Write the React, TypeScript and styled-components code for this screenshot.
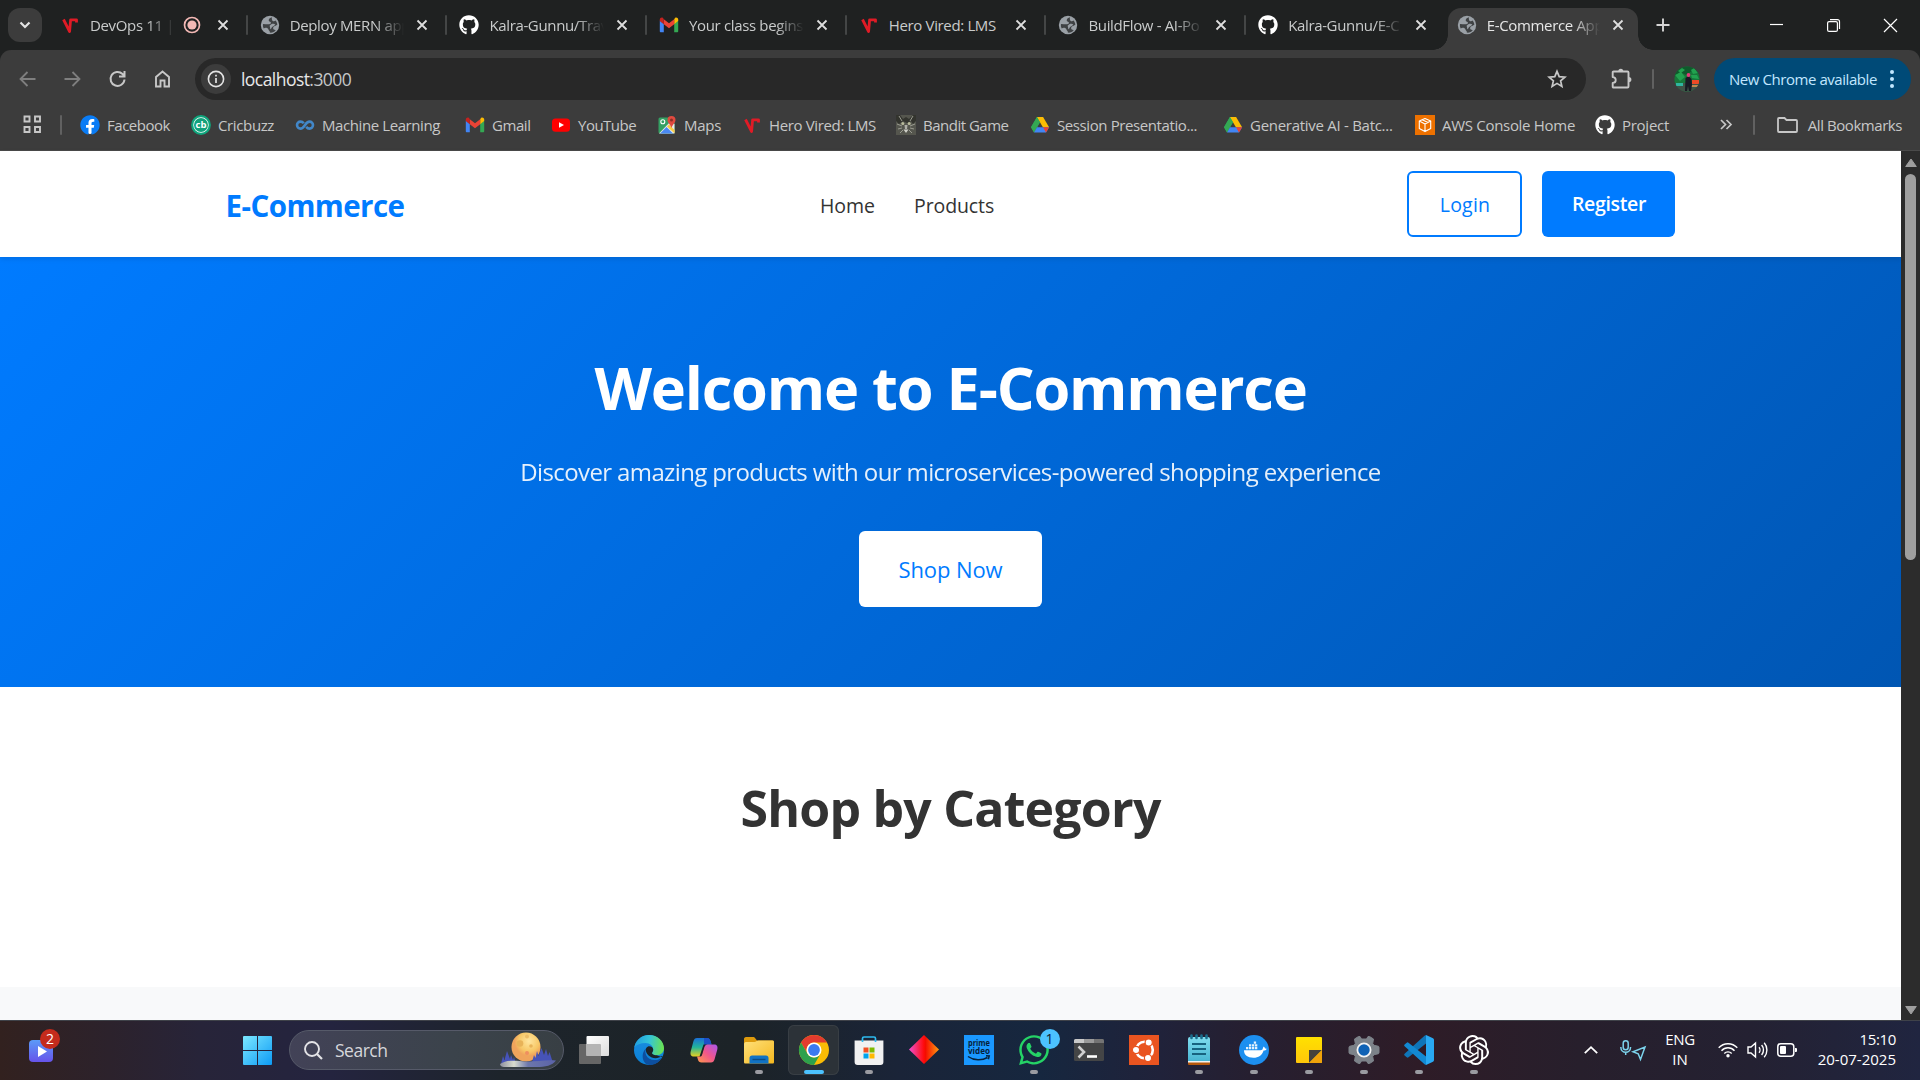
import React from "react";
import styled, { createGlobalStyle, css } from "styled-components";
import { FaGithub, FaWhatsapp, FaFacebook } from "react-icons/fa";
import { SiOpenai } from "react-icons/si";

const Global = createGlobalStyle`
  *, *::before, *::after { box-sizing: border-box; }
  html, body { margin: 0; padding: 0; overflow: hidden; }
  body { font-family: "Open Sans", "Noto Sans", sans-serif; background: #1f2020; }
  h1, h2, p { margin: 0; }
  svg { display: block; flex: none; overflow: visible; }
`;

const Screen = styled.div`
  width: 1920px;
  height: 1080px;
  display: flex;
  flex-direction: column;
  overflow: hidden;
`;

const Text = styled.span<{ $ls?: number }>`
  white-space: nowrap;
  letter-spacing: ${(p) => p.$ls ?? 0}px;
`;

/* ---------- tab strip ---------- */

const TabStrip = styled.div`
  height: 50px;
  flex: none;
  display: flex;
  background: #1f2121;
  padding-left: 8px;
`;

const TabSearch = styled.div`
  width: 34px;
  height: 34px;
  margin: 8px 5px 0 0;
  border-radius: 12px;
  background: #3c3c3c;
  display: flex;
  align-items: center;
  justify-content: center;
`;

const Tab = styled.div<{ $active?: boolean; $sep?: boolean }>`
  position: relative;
  width: 199.7px;
  height: 50px;
  display: flex;
  align-items: center;
  padding: 0 14px 0 13px;
  color: #c9cbcb;
  ${(p) =>
    p.$sep &&
    css`
      &::after {
        content: "";
        position: absolute;
        right: -1px;
        top: 15px;
        width: 2px;
        height: 20px;
        border-radius: 1px;
        background: #444646;
      }
    `}
  ${(p) =>
    p.$active &&
    css`
      width: 190px;
      height: 42px;
      margin: 8px 0 0 3px;
      padding: 0 10px 8px 9px;
      border-radius: 13px 13px 0 0;
      background: #3c3c3c;
      color: #e6e6e6;
      &::before,
      &::after {
        content: "";
        position: absolute;
        bottom: 0;
        width: 15px;
        height: 15px;
      }
      &::before {
        left: -15px;
        background: radial-gradient(circle at 0 0, transparent 14.5px, #3c3c3c 15px);
      }
      &::after {
        right: -15px;
        background: radial-gradient(circle at 100% 0, transparent 14.5px, #3c3c3c 15px);
      }
    `}
`;

const TabTitle = styled.div<{ $fade: boolean }>`
  flex: 1;
  min-width: 0;
  margin: 0 8px 0 10px;
  overflow: hidden;
  font-size: 15px;
  line-height: 24px;
  ${(p) =>
    p.$fade &&
    css`
      mask-image: linear-gradient(90deg, #000 calc(100% - 28px), transparent 100%);
    `}
`;

const CloseBox = styled.div`
  width: 20px;
  display: flex;
  justify-content: center;
`;

const RecordSlot = styled.div`
  width: 20px;
  margin-right: 10px;
`;

const NewTab = styled.div`
  width: 20px;
  margin-left: 18px;
  display: flex;
  align-items: center;
`;

const WindowControls = styled.div`
  display: flex;
  align-items: center;
  margin-left: auto;
  padding-right: 23px;
  gap: 44px;
`;

/* ---------- toolbar ---------- */

const ToolbarBack = styled.div`
  flex: none;
  background: #1f2121;
`;

const Toolbar = styled.div`
  height: 58px;
  display: flex;
  align-items: center;
  background: #3c3c3c;
  border-radius: 11px 11px 0 0;
  padding: 0 9px 0 17px;
`;

const NavIcon = styled.div<{ $dim?: boolean }>`
  width: 45px;
  color: ${(p) => (p.$dim ? "#7f7f7f" : "#c7c7c7")};
`;

const Omnibox = styled.div`
  width: 1391px;
  height: 42px;
  border-radius: 21px;
  background: #282828;
  display: flex;
  align-items: center;
  padding: 0 19px 0 6px;
  margin-left: -2px;
`;

const SiteInfo = styled.div`
  width: 30px;
  height: 30px;
  border-radius: 50%;
  background: #3c3c3c;
  display: flex;
  align-items: center;
  justify-content: center;
  margin-right: 10px;
`;

const Url = styled.div`
  flex: 1;
  font-size: 17.5px;
  color: #e8e8e8;
`;

const Port = styled.span`
  color: #c4c7c9;
`;

const ToolDivider = styled.div`
  width: 2px;
  height: 20px;
  border-radius: 1px;
  background: #616161;
  flex: none;
`;

const ExtSlot = styled.div`
  margin: 0 19px 0 25px;
`;

const AvatarSlot = styled.div`
  margin: 0 14px 0 20px;
`;

const UpdateChip = styled.div`
  width: 197px;
  height: 42px;
  flex: none;
  border-radius: 21px;
  background: #004a77;
  color: #c2e7ff;
  display: flex;
  align-items: center;
  justify-content: space-between;
  padding: 0 17px 0 15px;
  font-size: 15px;
`;

/* ---------- bookmarks ---------- */

const Bookmarks = styled.div`
  height: 43px;
  display: flex;
  align-items: center;
  background: #3c3c3c;
  border-bottom: 1px solid #4a4a4a;
  padding: 0 18px 9px 23px;
  font-size: 15px;
  color: #c7c7c7;
`;

const AppsSlot = styled.div`
  width: 37px;
`;

const BookmarkList = styled.div`
  display: flex;
  margin-left: 18px;
`;

const Bookmark = styled.div<{ $w: number }>`
  width: ${(p) => p.$w}px;
  display: flex;
  align-items: center;
  gap: 7px;
`;

const BookmarkIcon = styled.div`
  width: 20px;
  height: 20px;
  flex: none;
`;

const FacebookMark = styled(FaFacebook)`
  color: #0a7cf5;
  background: radial-gradient(circle, #fff 60%, transparent 62%);
`;

const BookmarkEnd = styled.div`
  display: flex;
  align-items: center;
  margin-left: auto;
`;

const FolderSlot = styled.div`
  margin: 0 10px 0 22px;
`;

const Chevrons = styled.div`
  margin-right: 21px;
`;

/* ---------- page ---------- */

const Viewport = styled.div`
  flex: 1;
  min-height: 0;
  display: flex;
`;

const Page = styled.div`
  width: 1901px;
  background: #fff;
  display: flex;
  flex-direction: column;
`;

const SiteHeader = styled.header`
  position: relative;
  z-index: 1;
  flex: none;
  height: 106px;
  background: #fff;
  box-shadow: 0 2px 5px rgba(0, 0, 0, 0.1);
`;

const HeaderInner = styled.div`
  width: 1450px;
  height: 100%;
  margin: 0 auto;
  display: flex;
  align-items: center;
  justify-content: space-between;
`;

const Logo = styled.div`
  font-size: 29.5px;
  font-weight: 700;
  color: #007bff;
  width: 179px;
  padding-top: 2px;
`;

const SiteNav = styled.nav`
  display: flex;
  gap: 39px;
  font-size: 19.5px;
  font-weight: 500;
  color: #333;
  padding-top: 2px;
  margin-left: 2px;
`;

const AuthButtons = styled.div`
  display: flex;
  gap: 20px;
`;

const AuthButton = styled.div<{ $primary?: boolean; $w: number }>`
  width: ${(p) => p.$w}px;
  height: 66px;
  display: flex;
  align-items: center;
  justify-content: center;
  border-radius: 6px;
  font-size: 19.5px;
  font-weight: ${(p) => (p.$primary ? 600 : 500)};
  color: ${(p) => (p.$primary ? "#fff" : "#007bff")};
  background: ${(p) => (p.$primary ? "#007bff" : "#fff")};
  border: ${(p) => (p.$primary ? "none" : "2px solid #007bff")};
  padding-bottom: ${(p) => (p.$primary ? 2 : 0)}px;
  padding-top: ${(p) => (p.$primary ? 0 : 1)}px;
`;

const Hero = styled.section`
  height: 430px;
  flex: none;
  padding-top: 82px;
  display: flex;
  flex-direction: column;
  align-items: center;
  color: #fff;
  background: linear-gradient(135deg, #007bff 0%, #0056b3 100%);
`;

const HeroTitle = styled.h1`
  font-size: 59.5px;
  line-height: 96px;
  font-weight: 700;
`;

const HeroSub = styled.p`
  margin-top: 17px;
  font-size: 24px;
  line-height: 40px;
  opacity: 0.9;
`;

const ShopButton = styled.div`
  margin-top: 39px;
  width: 183px;
  height: 76px;
  border-radius: 6px;
  background: #fff;
  color: #007bff;
  font-size: 22px;
  font-weight: 500;
  display: flex;
  align-items: center;
  justify-content: center;
`;

const Categories = styled.section`
  height: 300px;
  flex: none;
  padding-top: 81px;
  text-align: center;
`;

const CategoryTitle = styled.h2`
  font-size: 50px;
  line-height: 80px;
  font-weight: 700;
  color: #333;
`;

const NextSection = styled.section`
  flex: 1;
  background: #f8f9fa;
`;

const Scrollbar = styled.div`
  width: 19px;
  background: #2c2c2c;
  display: flex;
  flex-direction: column;
  align-items: center;
  padding: 7px 0 5px;
`;

const Thumb = styled.div`
  width: 11px;
  height: 386px;
  margin: 7px 0 auto;
  border-radius: 6px;
  background: #9f9f9f;
`;

/* ---------- taskbar ---------- */

const Taskbar = styled.div`
  height: 60px;
  flex: none;
  display: flex;
  align-items: center;
  border-top: 1px solid #3f4249;
  color: #fff;
  background: linear-gradient(
    90deg,
    #32211f 0,
    #2c222c 110px,
    #272439 200px,
    #24243f 330px,
    #1d242b 500px,
    #1c2327 740px,
    #1a2438 900px,
    #16273f 1040px,
    #20223a 1160px,
    #261f30 1250px,
    #2e1c27 1420px,
    #271f2c 1580px,
    #242132 1750px,
    #202540 1920px
  );
`;

const Widgets = styled.div`
  position: relative;
  width: 24px;
  height: 22px;
  margin-left: 29px;
`;

const Badge = styled.div<{ $blue?: boolean }>`
  position: absolute;
  right: ${(p) => (p.$blue ? -11 : -7)}px;
  top: ${(p) => (p.$blue ? -6 : -11)}px;
  width: 20px;
  height: 20px;
  border-radius: 50%;
  background: ${(p) => (p.$blue ? "#4cc2ff" : "#c42b1c")};
  color: ${(p) => (p.$blue ? "#10202c" : "#fff")};
  font-size: 14px;
  line-height: 20px;
  text-align: center;
`;

const StartSlot = styled.div`
  margin-left: 190px;
`;

const SearchBox = styled.div`
  width: 275px;
  height: 40px;
  margin: 0 0 1px 17px;
  border-radius: 20px;
  border: 1px solid #565a69;
  background: linear-gradient(90deg, #424257, #3b434b 60%, #383f44);
  display: flex;
  align-items: center;
  padding: 0 7px 0 14px;
  font-size: 17.5px;
  color: #d6d7db;
`;

const SearchText = styled.div`
  flex: 1;
  margin-left: 12px;
`;

const AppRow = styled.div`
  display: flex;
  margin: 0 0 1px 2px;
`;

const AppCell = styled.div<{ $active?: boolean }>`
  position: relative;
  width: 51px;
  height: 50px;
  margin: 0 2px;
  border-radius: 6px;
  display: flex;
  flex-direction: column;
  align-items: center;
  padding-top: 10px;
  ${(p) =>
    p.$active &&
    css`
      background: #2c3238;
      box-shadow: inset 0 0 0 1px #383e44;
    `}
`;

const AppIcon = styled.div`
  position: relative;
  width: 30px;
  height: 30px;
  flex: none;
  display: flex;
  align-items: center;
  justify-content: center;
`;

const Running = styled.div<{ $active?: boolean }>`
  margin-top: 5px;
  width: ${(p) => (p.$active ? 20 : 8)}px;
  height: 4px;
  border-radius: 2px;
  background: ${(p) => (p.$active ? "#4cc2ff" : "#9a9ba1")};
`;

const Tray = styled.div`
  margin-left: auto;
  display: flex;
  align-items: center;
  padding: 0 24px 2px 0;
  font-size: 15px;
  line-height: 20px;
`;

const PrivacySlot = styled.div`
  margin: 2px 0 0 22px;
`;

const Lang = styled.div`
  display: flex;
  flex-direction: column;
  align-items: center;
  width: 30px;
  margin: 0 23px 1px 19px;
`;

const StatusIcons = styled.div`
  display: flex;
  align-items: center;
  gap: 9px;
  margin-right: 20px;
`;

const Clock = styled.div`
  display: flex;
  flex-direction: column;
  align-items: flex-end;
  width: 79px;
  margin-bottom: 2px;
`;

/* ---------- small favicons, all on a 20 grid ---------- */

const Vired = () => (
  <svg width="20" height="20" viewBox="0 0 20 20">
    <path d="M3.500 4.500 9.600 16.500 10.600 4.800H16.500V7.500" fill="none" stroke="#e01b26" strokeWidth="2.800" strokeLinejoin="round" />
  </svg>
);

const Globe = () => (
  <svg width="20" height="20" viewBox="0 0 20 20">
    <circle cx="10" cy="10" r="9.200" fill="#9aa0a6" />
    <path
      d="M12 2.300c-1.600.3-3.300 1.600-3.300 3 0 1.200 1.300 1.300 2 2 .6.700.1 1.500-.8 1.800-1.700.5-3.900-.1-6.900-.1-.3 1.700.1 3.200.7 4.400 1-.6 2.300-.8 3.400-.3 1.200.5 1.200 1.600 1.900 2.300.6.600 1 .9.800 2.200 2.500.3 4.700-.8 6-2.700-1.300.2-2.600-.4-2.700-1.600-.1-1.300 1-1.900 1.900-2.300.8-.4 1.400-1.100 2.300-1.100-.1-1.800-.7-3.200-1.700-4.400-.7.800-2 1.100-2.900.4-.9-.800-1.100-2.300-.7-3.600z"
      fill="#2f3133"
      opacity=".85"
    />
    <path d="M11.300 9.200c1.500-.7 3-.6 4 .2-.6 1.300-2.300 1.700-3.200 2.600-.9.800-.7 2-1.600 2.300-.9-1.200.1-2.300-1-3.200.5-.8 1.100-1.500 1.800-1.900z" fill="#9aa0a6" />
  </svg>
);

const Gmail = () => (
  <svg width="20" height="20" viewBox="0 0 20 20">
    <path d="M.8 5.500V16.200c0 .6.500 1 1 1H4.800V9z" fill="#4285f4" />
    <path d="M15.200 17.200h3c.5 0 1-.4 1-1V5.500L15.200 9z" fill="#34a853" />
    <path d="M15.200 4.200V9.300l4-3.200V4.500c0-1.700-1.900-2.600-3.200-1.600z" fill="#fbbc04" />
    <path d="M4.800 9.300V4.200L10 8.200l5.200-4V9.300L10 13.300z" fill="#ea4335" />
    <path d="M.8 4.500v1.600l4 3.200V4.200L4 2.900C2.700 1.900.8 2.800.8 4.500z" fill="#c5221f" />
  </svg>
);

const Cricbuzz = () => (
  <svg width="20" height="20" viewBox="0 0 20 20">
    <circle cx="10" cy="10" r="8.800" fill="#fff" stroke="#0fa57c" strokeWidth="2.200" />
    <circle cx="10" cy="10" r="7" fill="#12a17c" />
    <text x="10" y="13.300" fontSize="9.500" fontWeight="700" textAnchor="middle" fill="#fff">cb</text>
  </svg>
);

const Infinity = () => (
  <svg width="20" height="20" viewBox="0 0 20 20">
    <path d="M8.800 8.300C7.900 7.200 6.800 6.600 5.500 6.600a3.500 3.500 0 0 0 0 7c4.200 0 4.600-7 9-7a3.500 3.500 0 0 1 0 7c-1.300 0-2.400-.6-3.300-1.700" fill="none" stroke="#4287c8" strokeWidth="2.600" />
  </svg>
);

const YouTube = () => (
  <svg width="20" height="20" viewBox="0 0 20 20">
    <rect x="1" y="3.500" width="18" height="13.200" rx="3.500" fill="#f00" />
    <path d="M8 7.200v5.600l5-2.800z" fill="#fff" />
  </svg>
);

const Maps = () => (
  <svg width="20" height="20" viewBox="0 0 20 20">
    <rect x="1.500" y="2.500" width="16" height="16" rx="1.500" fill="#34a063" />
    <path d="M2 18.500 14 6l3.500 3v9.500z" fill="#e9e9e9" />
    <path d="M3 18.500 9.500 12l6.500 6.500z" fill="#4a89f3" />
    <path d="M10 11.500 12 9.500 17.500 15v3.300z" fill="#fbcb3f" />
    <circle cx="5.800" cy="6.800" r="2" fill="none" stroke="#fff" strokeWidth="1.100" />
    <path d="M14.500 1a4 4 0 0 1 4 4c0 3-3.200 4.500-4 8-.8-3.500-4-5-4-8a4 4 0 0 1 4-4z" fill="#e04a3f" />
    <circle cx="14.500" cy="5" r="1.500" fill="#8c2f27" />
  </svg>
);

const Bandit = () => (
  <svg width="20" height="20" viewBox="0 0 20 20">
    <rect width="20" height="20" fill="#55564e" />
    <path d="M0 0h4l3 4 3-2 3 2 4-4h3v6l-3 3-2-3-4 2-4-2-4 3-3-3z" fill="#33342e" />
    <path d="M3 1l3 5M17 1l-3 5M1 9l5 2M19 9l-5 2M2 14l4-1M18 14l-4-1M4 18l3-3M16 18l-3-3" stroke="#9a9b90" strokeWidth="1" />
    <circle cx="6.800" cy="8.500" r="1.500" fill="#b9bb9c" />
    <circle cx="13.200" cy="8.500" r="1.500" fill="#b9bb9c" />
    <path d="M8.500 10h3l-.5 4h-2z" fill="#b0b0a8" />
    <path d="M7.500 14.500h5L10 18z" fill="#d0d0c9" />
  </svg>
);

const Drive = () => (
  <svg width="20" height="20" viewBox="0 0 20 20">
    <path d="M6.900 2h6.200L10 7.300 4 17.600 1 12.300z" fill="#1ea362" />
    <path d="M6.900 2h6.200l6 10.300h-6.200z" fill="#fbbc04" />
    <path d="M6.900 2 1 12.300l3 5.300L10 7.300z" fill="#34a853" />
    <path d="M7 12.300h12.100l-3.100 5.300H4z" fill="#4285f4" />
    <path d="M13 12.300h6.100L16 17.600z" fill="#ea4335" />
  </svg>
);

const Aws = () => (
  <svg width="20" height="20" viewBox="0 0 20 20">
    <rect width="20" height="20" fill="#ed7100" />
    <path d="M10 3.500 15.700 6v7.500L10 16.600 4.300 13.500V6zM4.300 6 10 9l5.700-3M10 9v7.500M7.200 4.700 13 7.600" fill="none" stroke="#fff" strokeWidth="1.100" strokeLinejoin="round" />
  </svg>
);

const Cross = () => (
  <svg width="10" height="10" viewBox="0 0 10 10">
    <path d="M.5.5l9 9M9.500.5l-9 9" stroke="#dedede" strokeWidth="1.800" />
  </svg>
);

const Recording = () => (
  <svg width="18" height="18" viewBox="0 0 18 18">
    <circle cx="9" cy="9" r="7.500" fill="none" stroke="#f2b8b5" strokeWidth="1.700" />
    <circle cx="9" cy="9" r="4.600" fill="#f2b8b5" />
  </svg>
);

/* ---------- taskbar icons, on a 30 grid ---------- */

const I = ({ children }: { children: React.ReactNode }) => (
  <svg width="30" height="30" viewBox="0 0 30 30">{children}</svg>
);

const TaskView = () => (
  <I>
    <defs>
      <linearGradient id="tv" x1="0" y1="0" x2="1" y2="1"><stop stopColor="#fff" /><stop offset="1" stopColor="#dcdcdc" /></linearGradient>
    </defs>
    <rect x="0" y="9" width="22" height="20" rx="1" fill="#666" />
    <rect x="7.500" y="1" width="22.500" height="20" rx="1" fill="url(#tv)" />
    <path d="M7.500 9H21a1 1 0 0 1 1 1v11H7.500z" fill="#b4b4b4" />
  </I>
);

const Edge = () => (
  <I>
    <defs>
      <linearGradient id="eg" x1="0" y1=".3" x2="1" y2=".4"><stop stopColor="#1f9de0" /><stop offset=".5" stopColor="#35c5d8" /><stop offset="1" stopColor="#6be34f" /></linearGradient>
      <linearGradient id="eb" x1="0" y1="0" x2="0" y2="1"><stop stopColor="#1b8fe0" /><stop offset="1" stopColor="#0a7fd6" /></linearGradient>
    </defs>
    <circle cx="15" cy="15" r="15" fill="url(#eb)" />
    <path d="M.3 12.500C1.500 5.500 7.500 0 15 0c8.500 0 15 6.300 15 13.300 0 4.200-3.300 6.900-7.200 6.900-3.400 0-5.300-1.500-4.600-2.700.8-1.200 1-1.900 1-3 0-3.400-3-6.500-7.700-6.500C6.500 8 2.500 9.500.3 12.500z" fill="url(#eg)" />
    <path d="M12 13.500c-2 4 .5 11.500 8.500 11.500 3 0 5.300-1 7.500-2.600C25.500 27 20.800 30 15.500 30 8 29.500 6.500 18 12 13.500z" fill="#0d4f9f" />
    <path d="M12.300 13c-1.500 2.500.5 7.500 5.500 9.500 3.500 1.300 7.500.5 10-1.200.6-.4 1 0 .7.600-2.500-.3-4-.9-5.700-1.700-3.400 0-5.300-1.500-4.600-2.700.8-1.200 1-1.900 1-3-.4-3-4.900-4.500-6.900-1.500z" fill="#1c2327" />
  </I>
);

const Copilot = () => (
  <I>
    <defs>
      <linearGradient id="c1" x1="0" y1="0" x2="0" y2="1"><stop stopColor="#1b6fd8" /><stop offset=".5" stopColor="#22b59a" /><stop offset="1" stopColor="#e8d020" /></linearGradient>
      <linearGradient id="c2" x1="1" y1="0" x2="0" y2="1"><stop stopColor="#a856f0" /><stop offset=".5" stopColor="#f0568b" /><stop offset="1" stopColor="#ff9a4a" /></linearGradient>
    </defs>
    <path d="M8 3h10c2 0 3 1.500 3.500 3l1 3.500h-4c-2 0-2.800 1-3.400 3l-2 6.500c-.6 1.800-1.500 2.500-3.500 2.500H5c-3 0-4-2-3.300-5L4.500 6C5.200 4 6 3 8 3z" fill="url(#c1)" />
    <path d="M15 3h3.500c1.500 0 2.500 1.500 3 3l1 3.500H18c-1.500 0-2.500.7-3 2z" fill="#1c50c8" />
    <path d="M22 27.500H12.500c-2 0-3-1-3.500-2.800l-1-3.200h1.600c2 0 3-1 3.500-2.800l2-6.700c.6-1.800 1.600-2.500 3.400-2.500H25c3 0 4 2 3.300 5l-2.800 10c-.7 2-1.500 3-3.500 3z" fill="url(#c2)" />
    <path d="M14.500 9.500h4c-1.500 0-2.600 1-3.100 2.500L13 20c-.4 1-1 1.500-2 1.500h-.5z" fill="#1c2327" />
  </I>
);

const Explorer = () => (
  <I>
    <defs>
      <linearGradient id="ex" x1="0" y1="0" x2="1" y2="1"><stop stopColor="#ffe07a" /><stop offset="1" stopColor="#f5b81f" /></linearGradient>
    </defs>
    <path d="M0 4c0-1 .7-2 2-2h7c1 0 1.500.4 2 1l2 2.500h15c1.500 0 2 .7 2 2V12H0z" fill="#dd9a0c" />
    <path d="M0 10c0-2 .5-3 2-3h8.500c1.500 0 2-1.500 4-1.500H28.500c1 0 1.500.6 1.500 1.500v20c0 1-.5 1.500-1.500 1.500h-27C.5 28.500 0 28 0 27z" fill="url(#ex)" />
    <path d="M5.500 28.500V23c0-1.500 1-2.500 2.500-2.500h14c1.500 0 2.500 1 2.500 2.500v5.500z" fill="#1173c4" />
    <path d="M8.500 24.500h13" stroke="#0a4c86" strokeWidth="1.400" />
  </I>
);

const Chrome = () => (
  <I>
    <circle cx="15" cy="15" r="15" fill="#fbbc05" />
    <path d="M2 7.500A15 15 0 0 1 28 7.500H15a7.500 7.500 0 0 0-6.500 11.250z" fill="#e33b2e" />
    <path d="M2 7.500 8.500 18.750A7.500 7.500 0 0 0 21.500 18.750L15 30A15 15 0 0 1 2 7.500z" fill="#2da14c" />
    <circle cx="15" cy="15" r="7.500" fill="#fff" />
    <circle cx="15" cy="15" r="5.900" fill="#3a7af0" />
  </I>
);

const Store = () => (
  <I>
    <path d="M.6 5.500h28.800V27a3 3 0 0 1-3 3H3.600a3 3 0 0 1-3-3z" fill="#f1f1f1" />
    <path d="M8.500 7V3.500A1.500 1.500 0 0 1 10 2h10a1.500 1.500 0 0 1 1.500 1.500V7" fill="none" stroke="#2ebbf0" strokeWidth="1.700" />
    <path d="M9.500 12.500h5v5h-5z" fill="#f25022" />
    <path d="M15.500 12.500h5v5h-5z" fill="#7fba00" />
    <path d="M9.500 18.500h5v5h-5z" fill="#00a4ef" />
    <path d="M15.500 18.500h5v5h-5z" fill="#ffb900" />
  </I>
);

const Diamond = () => (
  <I>
    <defs>
      <linearGradient id="dm"><stop stopColor="#f050d0" /><stop offset=".5" stopColor="#ff0a0a" /><stop offset=".55" stopColor="#f40d00" /><stop offset="1" stopColor="#ff9a10" /></linearGradient>
    </defs>
    <path d="M15 0 30 14.500 15 29 0 14.500z" fill="url(#dm)" />
  </I>
);

const Prime = () => (
  <I>
    <rect width="30" height="30" fill="#1a98ff" />
    <text x="15" y="10.500" fontSize="9.500" fontWeight="700" textAnchor="middle" fill="#06223c" textLength="22" lengthAdjust="spacingAndGlyphs">prime</text>
    <text x="15" y="19" fontSize="9.500" fontWeight="700" textAnchor="middle" fill="#06223c" textLength="22" lengthAdjust="spacingAndGlyphs">video</text>
    <path d="M4 21.500c6 4.300 14 4.300 19.500 1M22 20.800l3.200.2-.8 3.200" fill="none" stroke="#06223c" strokeWidth="1.500" />
  </I>
);

const Terminal = () => (
  <I>
    <rect y="4" width="30" height="22" rx="1.500" fill="#444546" />
    <path d="M1.500 4h8.500v4H0V5.500A1.500 1.500 0 0 1 1.500 4z" fill="#c9c9c9" />
    <path d="M10 4h10v4H10z" fill="#9a9a9a" />
    <path d="M20 4h8.500A1.500 1.500 0 0 1 30 5.500V8H20z" fill="#747474" />
    <path d="m4.500 11.500 5.500 5.500-5.500 5.500" fill="none" stroke="#d0d0d0" strokeWidth="2.600" />
    <path d="M13 21.500h10" stroke="#fff" strokeWidth="2.600" />
  </I>
);

const Ubuntu = () => (
  <I>
    <rect width="30" height="30" fill="#e95420" />
    <circle cx="15.500" cy="15" r="8.300" fill="none" stroke="#fff" strokeWidth="2.600" />
    <g fill="#fff" stroke="#e95420" strokeWidth="1.200">
      <circle cx="7" cy="15" r="3.600" />
      <circle cx="19.700" cy="7.500" r="3.600" />
      <circle cx="19" cy="23" r="3.600" />
    </g>
  </I>
);

const Notepad = () => (
  <I>
    <defs>
      <linearGradient id="np" x1="0" y1="0" x2="0" y2="1"><stop stopColor="#7fdcee" /><stop offset="1" stopColor="#49b6d3" /></linearGradient>
    </defs>
    <path d="M4 24h22v5a1 1 0 0 1-1 1H5a1 1 0 0 1-1-1z" fill="#b5580d" />
    <path d="M4 22h22v5.500H4z" fill="#f2f2f2" />
    <path d="M4 4a2 2 0 0 1 2-2h18a2 2 0 0 1 2 2v22H4z" fill="url(#np)" />
    <path d="M8 9h14M8 14h14M8 19h14" stroke="#17627f" strokeWidth="1.800" />
    <path d="M7.500.5V3M12.500.5V3M17.500.5V3M22.500.5V3" stroke="#1a6d8c" strokeWidth="2.600" strokeLinecap="round" />
  </I>
);

const Docker = () => (
  <I>
    <circle cx="15" cy="15" r="15" fill="#1d8fef" />
    <path d="M5 15.300h16.500c1.300 0 2.200-.5 2.300-1.700.1-.8.400-1.400 1-2 .8.600 1.100 1.200 1.200 2 .8-.1 1.200 0 1.600.3-.5 1.100-1.500 1.600-3 1.600-1.600 5-5 7.300-10.200 7.300C8.500 22.800 5 20 5 15.300z" fill="#fff" />
    <path d="M7 12h2.300v2.300H7zM10 12h2.300v2.300H10zM13 12h2.300v2.300H13zM16 12h2.300v2.300H16zM10 9.300h2.300v2.200H10zM13 9.300h2.300v2.200H13zM16 9.300h2.300v2.200H16zM14.800 6.600h2.300v2.200h-2.300z" fill="#e4f2fd" />
  </I>
);

const Sticky = () => (
  <I>
    <defs>
      <linearGradient id="st" x1="0" y1="0" x2="0" y2="1"><stop stopColor="#ffe100" /><stop offset="1" stopColor="#ffc60a" /></linearGradient>
    </defs>
    <rect x="2" y="2" width="26" height="26" rx="1" fill="url(#st)" />
    <path d="M15 15h13L15 28z" fill="#45423c" />
    <path d="M28 15v12a1 1 0 0 1-1 1H15z" fill="#f0a30a" />
  </I>
);

const Settings = () => (
  <I>
    <path
      d="M11 1.500 12.500 4h5L19 1.500h1.500L24.500 4l-.8 4.500 1.300 1.800 4.500 1 .5 1v5.400l-.5 1-4.500 1-1.300 1.800.8 4.500-4 2.500H19L17.500 26h-5L11 28.500H9.500L5.500 26l.8-4.500L5 19.700l-4.500-1L0 17.700v-5.400l.5-1 4.500-1 1.300-1.800L5.500 4l4-2.500z"
      fill="#7c8289"
      stroke="#7c8289"
      strokeWidth="1"
      strokeLinejoin="round"
    />
    <circle cx="15" cy="15" r="6.600" fill="#0f62b5" stroke="#f3f3f3" strokeWidth="1.800" />
  </I>
);

const VsCode = () => (
  <I>
    <path d="M22 0 29 3.300a1.800 1.800 0 0 1 1 1.700v20a1.800 1.800 0 0 1-1 1.700L22 30z" fill="#29a9f2" />
    <path d="M22 0v8.500L4.500 22.300a1.500 1.500 0 0 1-1.800 0L.6 20.500a1.200 1.200 0 0 1 0-1.800L20.500.7z" fill="#0f75b8" />
    <path d="M22 30v-8.500L4.500 7.700a1.500 1.500 0 0 0-1.800 0L.6 9.500a1.200 1.200 0 0 0 0 1.800L20.500 29.300z" fill="#1389d2" />
  </I>
);

const Moon = () => (
  <svg width="56" height="36" viewBox="0 0 56 36">
    <defs>
      <radialGradient id="mn" cx=".6" cy=".3"><stop stopColor="#ffe6a0" /><stop offset=".7" stopColor="#f7c766" /><stop offset="1" stopColor="#efa45c" /></radialGradient>
      <linearGradient id="gr"><stop stopColor="#8d8f9c" /><stop offset=".25" stopColor="#d9dccf" /><stop offset=".5" stopColor="#6d77ab" /><stop offset="1" stopColor="#5a62a8" /></linearGradient>
    </defs>
    <circle cx="26" cy="15" r="14.500" fill="url(#mn)" />
    <circle cx="20" cy="11.500" r="3.300" fill="#e8b358" />
    <circle cx="31" cy="14" r="1.800" fill="#e8b358" />
    <circle cx="27" cy="4.500" r="2" fill="#edbd66" />
    <circle cx="27" cy="21" r="2" fill="#ef8f60" />
    <path d="M1 32l2-8 1.500 4L7 19l3 8 1-4 2 5 1-3 2 7z" fill="#4653b8" />
    <path d="M32 30l2-7 1.500 3L37 19l1.500 5 3-8 2.500 7 2-6 2 7 1.500-4L53 31z" fill="#4653b8" />
    <path d="M0 32c8-5 18-3 25-2.500 10 .5 20-2 31-1-4 5-10 6.500-20 6.500H4c-2 0-4-1-4-3z" fill="url(#gr)" />
  </svg>
);

/* ---------- data ---------- */

const GH = () => <FaGithub size={20} color="#fff" />;

const tabs = [
  { icon: <Vired />, title: "DevOps 11 | In", rec: true, fade: true },
  { icon: <Globe />, title: "Deploy MERN app", fade: true },
  { icon: <GH />, title: "Kalra-Gunnu/Trav", fade: true },
  { icon: <Gmail />, title: "Your class begins", fade: true },
  { icon: <Vired />, title: "Hero Vired: LMS", fade: false },
  { icon: <Globe />, title: "BuildFlow - AI-Po", fade: true },
  { icon: <GH />, title: "Kalra-Gunnu/E-C", fade: true },
  { icon: <Globe />, title: "E-Commerce App", fade: true, active: true },
];

const bookmarks = [
  { icon: <FacebookMark size={20} />, t: "Facebook", w: 111, ls: -0.47 },
  { icon: <Cricbuzz />, t: "Cricbuzz", w: 104, ls: -0.37 },
  { icon: <Infinity />, t: "Machine Learning", w: 170, ls: -0.41 },
  { icon: <Gmail />, t: "Gmail", w: 86, ls: -0.44 },
  { icon: <YouTube />, t: "YouTube", w: 106, ls: -0.5 },
  { icon: <Maps />, t: "Maps", w: 85, ls: -0.29 },
  { icon: <Vired />, t: "Hero Vired: LMS", w: 154, ls: -0.36 },
  { icon: <Bandit />, t: "Bandit Game", w: 134, ls: -0.5 },
  { icon: <Drive />, t: "Session Presentatio...", w: 193, ls: -0.4 },
  { icon: <Drive />, t: "Generative AI - Batc...", w: 192, ls: -0.28 },
  { icon: <Aws />, t: "AWS Console Home", w: 180, ls: -0.3 },
  { icon: <GH />, t: "Project", w: 90, ls: -0.27 },
];

const apps: { icon: React.ReactNode; run?: boolean; active?: boolean; badge?: string }[] = [
  { icon: <TaskView /> },
  { icon: <Edge /> },
  { icon: <Copilot /> },
  { icon: <Explorer />, run: true },
  { icon: <Chrome />, run: true, active: true },
  { icon: <Store />, run: true },
  { icon: <Diamond /> },
  { icon: <Prime /> },
  { icon: <FaWhatsapp size={34} color="#25d366" />, run: true, badge: "1" },
  { icon: <Terminal /> },
  { icon: <Ubuntu /> },
  { icon: <Notepad />, run: true },
  { icon: <Docker />, run: true },
  { icon: <Sticky />, run: true },
  { icon: <Settings />, run: true },
  { icon: <VsCode />, run: true },
  { icon: <SiOpenai size={30} color="#fff" />, run: true },
];

export default function App() {
  return (
    <Screen>
      <Global />
      <TabStrip>
        <TabSearch>
          <svg width="12" height="8" viewBox="0 0 12 8"><path d="M1.500 1.500 6 6l4.500-4.500" fill="none" stroke="#e3e3e3" strokeWidth="2.200" /></svg>
        </TabSearch>
        {tabs.map((t, i) => (
          <Tab key={i} $active={t.active} $sep={i < 6}>
            {t.icon}
            <TabTitle $fade={t.fade}><Text $ls={-0.35}>{t.title}</Text></TabTitle>
            {t.rec && <RecordSlot><Recording /></RecordSlot>}
            <CloseBox><Cross /></CloseBox>
          </Tab>
        ))}
        <NewTab>
          <svg width="14" height="14" viewBox="0 0 14 14"><path d="M7 .5v13M.5 7h13" stroke="#d5d5d5" strokeWidth="1.900" /></svg>
        </NewTab>
        <WindowControls>
          <svg width="13" height="13" viewBox="0 0 13 13"><path d="M0 5.500h13" stroke="#fff" strokeWidth="1.200" /></svg>
          <svg width="13" height="13" viewBox="0 0 13 13"><rect x=".6" y="2.600" width="9.800" height="9.800" rx="1.500" fill="none" stroke="#fff" strokeWidth="1.200" /><path d="M3 .6h7.500a2 2 0 0 1 2 2V10" fill="none" stroke="#fff" strokeWidth="1.200" /></svg>
          <svg width="13" height="13" viewBox="0 0 13 13"><path d="m0 0 13 13M13 0 0 13" stroke="#fff" strokeWidth="1.200" /></svg>
        </WindowControls>
      </TabStrip>

      <ToolbarBack>
        <Toolbar>
          <NavIcon $dim><svg width="20" height="20" viewBox="0 0 20 20"><path d="M18.500 10H4M10.500 3 3.500 10l7 7" fill="none" stroke="currentColor" strokeWidth="1.800" /></svg></NavIcon>
          <NavIcon $dim><svg width="20" height="20" viewBox="0 0 20 20"><path d="M2.500 10H17M10.500 3l7 7-7 7" fill="none" stroke="currentColor" strokeWidth="1.800" /></svg></NavIcon>
          <NavIcon><svg width="20" height="20" viewBox="0 0 20 20"><path d="M17.500 10.500a7 7 0 1 1-2-5.500l2 2M17.500 2v5.500h-5.500" fill="none" stroke="currentColor" strokeWidth="2" /></svg></NavIcon>
          <NavIcon><svg width="20" height="20" viewBox="0 0 20 20"><path d="M4 17.500V8l6.500-5.500L17 8v9.500h-4.500v-6h-4v6z" fill="none" stroke="currentColor" strokeWidth="1.900" /></svg></NavIcon>
          <Omnibox>
            <SiteInfo>
              <svg width="18" height="18" viewBox="0 0 18 18"><circle cx="9" cy="9" r="7.600" fill="none" stroke="#e3e3e3" strokeWidth="1.600" /><path d="M9 8v5M9 4.800v1.800" stroke="#e3e3e3" strokeWidth="1.700" /></svg>
            </SiteInfo>
            <Url><Text $ls={-0.55}>localhost<Port>:3000</Port></Text></Url>
            <svg width="20" height="20" viewBox="0 0 20 20"><path d="m10 2.300 2.200 5.300 5.700.5-4.300 3.700 1.300 5.600L10 14.400l-4.900 3 1.300-5.600L2.100 8.100l5.700-.5z" fill="none" stroke="#c7c7c7" strokeWidth="1.700" /></svg>
          </Omnibox>
          <ExtSlot>
            <svg width="22" height="22" viewBox="0 0 22 22"><path d="M2.500 3.500h14a1 1 0 0 1 1 1v14a1 1 0 0 1-1 1h-14a.8.8 0 0 1-.8-.8v-3.800c4 0 4-5.800 0-5.800V4.300a.8.8 0 0 1 .8-.8z" fill="none" stroke="#c7c7c7" strokeWidth="1.900" strokeLinejoin="round" /><path d="M7.300 3.300a2.500 2.500 0 0 1 5 0zM17.800 9a2.500 2.500 0 0 1 0 5.200z" fill="#c7c7c7" /></svg>
          </ExtSlot>
          <ToolDivider />
          <AvatarSlot>
            <svg width="26" height="26" viewBox="0 0 26 26">
              <defs><clipPath id="av"><circle cx="13" cy="13" r="12.600" /></clipPath></defs>
              <g clipPath="url(#av)">
                <rect width="26" height="26" fill="#17783a" />
                <path d="M0 0h26v8L18 5l-6 4-6-3-6 5z" fill="#0f5a2c" />
                <path d="M4 5l4-3 3 2-4 3zM1 9l6-3 4 5-5 4zM17 4l3-2 4 5-5 1zM17 9l6 0 2 4-7-1z" fill="#22a24f" />
                <path d="M0 17h26v9H0z" fill="#3f5347" />
                <path d="M2 17h7v3H2z" fill="#2fb6a0" />
                <path d="M18 14h7v4h-7z" fill="#ee4a26" />
                <path d="M17 19h7v2h-7z" fill="#c08850" />
                <path d="M11.500 12l3-2 3 3 .5 6-1 6h-2l-1-5-1 5h-2z" fill="#191a24" />
                <circle cx="14.500" cy="9" r="1.900" fill="#e5397a" />
              </g>
            </svg>
          </AvatarSlot>
          <UpdateChip>
            <Text $ls={-0.44}>New Chrome available</Text>
            <svg width="4" height="18" viewBox="0 0 4 18"><g fill="#c2e7ff"><circle cx="2" cy="2" r="2" /><circle cx="2" cy="9" r="2" /><circle cx="2" cy="16" r="2" /></g></svg>
          </UpdateChip>
        </Toolbar>
        <Bookmarks>
          <AppsSlot>
            <svg width="19" height="19" viewBox="0 0 19 19"><path d="M1.500 1.500h5v5h-5zM12 1.500h5v5h-5zM1.500 12h5v5h-5zM12 12h5v5h-5z" fill="none" stroke="#c7c7c7" strokeWidth="1.900" /></svg>
          </AppsSlot>
          <ToolDivider />
          <BookmarkList>
            {bookmarks.map((b) => (
              <Bookmark key={b.t} $w={b.w}>
                <BookmarkIcon>{b.icon}</BookmarkIcon>
                <Text $ls={b.ls}>{b.t}</Text>
              </Bookmark>
            ))}
          </BookmarkList>
          <BookmarkEnd>
            <Chevrons>
              <svg width="12" height="11" viewBox="0 0 12 11"><path d="m1 1 4.500 4.500L1 10M6.500 1 11 5.500 6.500 10" fill="none" stroke="#c7c7c7" strokeWidth="1.700" /></svg>
            </Chevrons>
            <ToolDivider />
            <FolderSlot>
              <svg width="21" height="16" viewBox="0 0 21 16"><path d="M1 2a1 1 0 0 1 1-1h5.500l2 2H19a1 1 0 0 1 1 1v10a1 1 0 0 1-1 1H2a1 1 0 0 1-1-1z" fill="none" stroke="#c7c7c7" strokeWidth="1.800" /></svg>
            </FolderSlot>
            <Text $ls={-0.44}>All Bookmarks</Text>
          </BookmarkEnd>
        </Bookmarks>
      </ToolbarBack>

      <Viewport>
        <Page>
          <SiteHeader>
            <HeaderInner>
              <Logo><Text $ls={-0.55}>E-Commerce</Text></Logo>
              <SiteNav><Text>Home</Text><Text $ls={-0.1}>Products</Text></SiteNav>
              <AuthButtons>
                <AuthButton $w={115}><Text $ls={0.2}>Login</Text></AuthButton>
                <AuthButton $w={133} $primary><Text $ls={-0.35}>Register</Text></AuthButton>
              </AuthButtons>
            </HeaderInner>
          </SiteHeader>
          <Hero>
            <HeroTitle><Text $ls={-1.2}>Welcome to E-Commerce</Text></HeroTitle>
            <HeroSub><Text $ls={-0.62}>Discover amazing products with our microservices-powered shopping experience</Text></HeroSub>
            <ShopButton><Text $ls={-0.1}>Shop Now</Text></ShopButton>
          </Hero>
          <Categories>
            <CategoryTitle><Text $ls={-0.79}>Shop by Category</Text></CategoryTitle>
          </Categories>
          <NextSection />
        </Page>
        <Scrollbar>
          <svg width="12" height="9" viewBox="0 0 12 9"><path d="M6 1 11.300 8.500H.7z" fill="#9f9f9f" stroke="#9f9f9f" strokeLinejoin="round" /></svg>
          <Thumb />
          <svg width="12" height="9" viewBox="0 0 12 9"><path d="M6 8 11.300.5H.7z" fill="#9f9f9f" stroke="#9f9f9f" strokeLinejoin="round" /></svg>
        </Scrollbar>
      </Viewport>

      <Taskbar>
        <Widgets>
          <svg width="24" height="22" viewBox="0 0 24 22"><defs><linearGradient id="wd" x1="0" y1="0" x2="0" y2="1"><stop stopColor="#5b9bf8" /><stop offset="1" stopColor="#6653ea" /></linearGradient></defs><rect width="24" height="22" rx="4" fill="url(#wd)" /><path d="M9 6v11l9-5.500z" fill="#fff" /></svg>
          <Badge>2</Badge>
        </Widgets>
        <StartSlot>
          <svg width="29" height="29" viewBox="0 0 29 29"><defs><linearGradient id="ws" x1="0" y1="0" x2="1" y2="1"><stop stopColor="#7ce8ff" /><stop offset="1" stopColor="#0d9bf5" /></linearGradient></defs><path d="M1 0h13v14H0V1a1 1 0 0 1 1-1zM15 0h13a1 1 0 0 1 1 1v13H15zM0 15h14v14H1a1 1 0 0 1-1-1zM15 15h14v13a1 1 0 0 1-1 1H15z" fill="url(#ws)" /></svg>
        </StartSlot>
        <SearchBox>
          <svg width="19" height="19" viewBox="0 0 19 19"><circle cx="8" cy="8" r="7" fill="none" stroke="#e3e3e6" strokeWidth="1.900" /><path d="m13 13 5 5" stroke="#e3e3e6" strokeWidth="2.200" /></svg>
          <SearchText><Text $ls={-0.5}>Search</Text></SearchText>
          <Moon />
        </SearchBox>
        <AppRow>
          {apps.map((a, i) => (
            <AppCell key={i} $active={a.active}>
              <AppIcon>
                {a.icon}
                {a.badge && <Badge $blue>{a.badge}</Badge>}
              </AppIcon>
              {a.run && <Running $active={a.active} />}
            </AppCell>
          ))}
        </AppRow>
        <Tray>
          <svg width="14" height="8" viewBox="0 0 14 8"><path d="m.8 7.200 6.200-6 6.200 6" fill="none" stroke="#fff" strokeWidth="1.800" /></svg>
          <PrivacySlot>
            <svg width="26" height="21" viewBox="0 0 26 21"><g fill="none" stroke="#7cd3ec" strokeWidth="1.500"><rect x="3.200" y=".8" width="5" height="9" rx="2.500" /><path d="M.8 7c0 7 9.800 7 9.800 0M5.700 12.200V15M25 7l-4.500 12.500-2.300-5.700-5.200-2z" /></g></svg>
          </PrivacySlot>
          <Lang><Text $ls={-0.4}>ENG</Text><Text>IN</Text></Lang>
          <StatusIcons>
            <svg width="20" height="16" viewBox="0 0 20 16"><g fill="none" stroke="#fff" strokeWidth="1.400"><path d="M.7 5.800c5-5.500 13.600-5.500 18.600 0M3.500 8.800c3.500-4 9.500-4 13 0M6.300 11.500c2-2.200 5.400-2.200 7.400 0" /></g><circle cx="10" cy="13.800" r="1.700" fill="#fff" /></svg>
            <svg width="21" height="18" viewBox="0 0 21 18"><g fill="none" stroke="#fff" strokeWidth="1.400"><path d="M1 6h3l4.500-4v14L4 12H1zM12 6.300c1.300 1.500 1.300 4 0 5.400M14.600 4c2.500 2.800 2.500 7.200 0 10M17.200 1.800c3.600 4 3.600 10.400 0 14.400" /></g></svg>
            <svg width="20" height="14" viewBox="0 0 20 14"><rect x=".8" y=".8" width="16" height="12.400" rx="3" fill="none" stroke="#fff" strokeWidth="1.500" /><rect x="3" y="3" width="6" height="8" rx="1" fill="#fff" /><path d="M18 5h1a1 1 0 0 1 1 1v2a1 1 0 0 1-1 1h-1z" fill="#fff" /></svg>
          </StatusIcons>
          <Clock><Text $ls={-0.35}>15:10</Text><Text>20-07-2025</Text></Clock>
        </Tray>
      </Taskbar>
    </Screen>
  );
}
